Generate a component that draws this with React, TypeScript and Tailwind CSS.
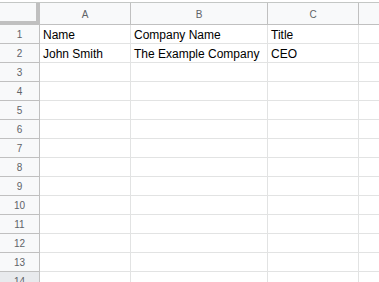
const columns = [
  { key: 'A', width: 'w-[91px]' },
  { key: 'B', width: 'w-[137px]' },
  { key: 'C', width: 'w-[91px]' },
  { key: 'D', width: 'w-[60px]' },
]

const data: Record<number, string[]> = {
  1: ['Name', 'Company Name', 'Title', ''],
  2: ['John Smith', 'The Example Company', 'CEO', ''],
}

const rows = Array.from({ length: 14 }, (_, i) => i + 1)

export default function App() {
  return (
    <div
      className="w-[379px] h-[282px] overflow-hidden bg-white pt-[2px]"
      style={{ fontFamily: '"Liberation Sans", Arial, sans-serif' }}
    >
      <div className="flex h-[23px] border-t border-[#c4c7c5] bg-[#f8f9fa]">
        <div className="w-[40px] shrink-0 border-r-4 border-b-4 border-[#c0c0c0]" />
        {columns.map((col) => (
          <div
            key={col.key}
            className={`${col.width} shrink-0 flex items-center justify-center pt-[2px] border-r border-b border-[#c0c0c0] text-[10px] text-[#5f6368]`}
          >
            {col.key === 'D' ? '' : col.key}
          </div>
        ))}
      </div>
      {rows.map((row) => (
        <div key={row} className="flex h-[19px]">
          <div
            className={`w-[40px] shrink-0 flex items-center justify-center pt-[1px] border-r border-b border-[#c0c0c0] text-[10px] text-[#5f6368] ${
              row === 14 ? 'bg-[#e8eaed]' : 'bg-[#f8f9fa]'
            }`}
          >
            {row}
          </div>
          {columns.map((col, i) => (
            <div
              key={col.key}
              className={`${col.width} shrink-0 flex items-end pb-[1px] pl-[3px] border-r border-b border-[#e2e3e3] text-[12px] leading-[14px] text-black whitespace-nowrap overflow-hidden`}
            >
              {data[row]?.[i] ?? ''}
            </div>
          ))}
        </div>
      ))}
    </div>
  )
}
